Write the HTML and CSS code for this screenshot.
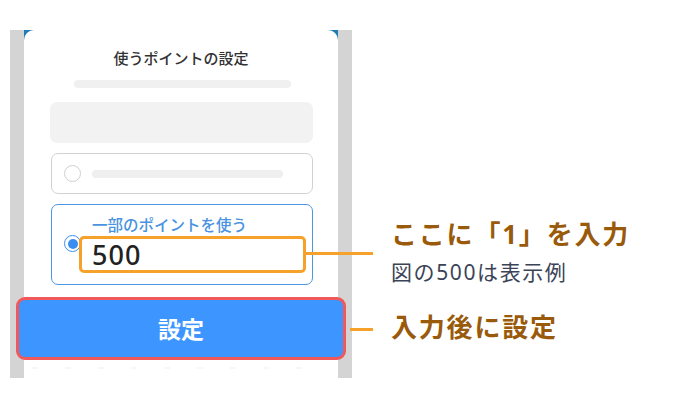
FILE: index.html
```html
<!DOCTYPE html>
<html lang="ja">
<head>
<meta charset="utf-8">
<link rel="stylesheet" href="styles.css">
</head>
<body>
<div class="page">
  <div class="frame">
    <div class="cardwrap">
      <div class="peek"></div>
      <div class="card">
        <div class="title">使うポイントの設定</div>
        <div class="bar"></div>
        <div class="block"></div>
        <div class="option">
          <span class="radio"></span>
          <span class="line"></span>
        </div>
        <div class="option selected">
          <span class="radio on"><span class="dot"></span></span>
          <div class="field">
            <div class="label">一部のポイントを使う</div>
            <div class="input">500</div>
          </div>
        </div>
        <div class="btn"><span>設定</span></div>
        <div class="rest"></div>
      </div>
    </div>
  </div>
  <div class="notes">
    <div class="head">ここに「1」を入力</div>
    <div class="sub">図の500は表示例</div>
    <div class="head second">入力後に設定</div>
  </div>
  <div class="conn conn1"></div>
  <div class="conn conn2"></div>
</div>
</body>
</html>
```
FILE: styles.css
```css
* { box-sizing: border-box; }
html, body { margin: 0; padding: 0; background: #fff; }
body {
  width: 700px; height: 420px; overflow: hidden;
  font-family: "Noto Sans", "Noto Sans CJK JP", sans-serif;
}
.page { position: relative; display: flex; width: 700px; height: 420px; }
.frame {
  margin: 30px 0 0 10px;
  width: 342px; height: 348px;
  background: #d4d4d4;
  padding: 0 14px;
}
.cardwrap { position: relative; height: 100%; }
.peek {
  position: absolute; left: 0; right: 0; top: 0; height: 12px;
  background:
    repeating-linear-gradient(90deg, #444 0 6px, transparent 6px 9px) 56px 0 / 204px 2px no-repeat,
    linear-gradient(90deg, #1f7bb3 0 14px, #e9e9e9 14px 300px, #1f7bb3 300px);
}
.card {
  position: relative;
  height: 100%;
  background: #fff;
  border-radius: 10px 10px 0 0;
  display: flex; flex-direction: column;
}
.title {
  padding-top: 18px;
  text-align: center;
  font-size: 15px; line-height: 20px;
  color: #333;
  font-weight: 500;
}
.bar {
  margin: 12px 47px 0 50px;
  height: 8px; border-radius: 4px;
  background: #f0f0f0;
}
.block {
  margin: 14px 25px 0 26px;
  height: 41px; border-radius: 7px;
  background: #f2f2f2;
}
.option {
  margin: 10px 25px 0 27px;
  height: 41px;
  border: 1px solid #d2d2d2;
  border-radius: 7px;
  display: flex; align-items: center;
}
.radio {
  flex: none;
  width: 17px; height: 17px;
  margin-left: 12px;
  border: 1px solid #cfcfcf;
  border-radius: 50%;
  background: #fff;
}
.line {
  margin-left: 11px;
  width: 191px; height: 8px;
  border-radius: 4px;
  background: #efefef;
}
.option.selected {
  height: 81px;
  border-color: #4d96e0;
  align-items: flex-start;
}
.radio.on {
  margin-top: 30px;
  border: 1.5px solid #3a8ef0;
  display: flex; align-items: center; justify-content: center;
}
.dot { width: 10px; height: 10px; border-radius: 50%; background: #3a8ef0; }
.field { flex: 1; margin: 0 6px 0 -2px; position: relative; }
.label {
  padding: 10px 0 0 13px;
  font-size: 15.5px; line-height: 20px;
  color: #4a93e0;
  font-weight: 500;
  white-space: nowrap;
}
.input {
  margin-top: 1px;
  height: 37px;
  border: 3px solid #f5a12a;
  border-radius: 5px;
  background: #fff;
  padding-left: 10px;
  font-size: 27px; line-height: 31px;
  letter-spacing: 1px;
  color: #222;
  font-weight: 500;
}
.btn {
  margin: 12px -8px 0 -8px;
  height: 63px;
  border: 3px solid #f0585a;
  border-radius: 9px;
  background: #3d95ff;
  display: flex; align-items: center; justify-content: center;
  position: relative;
}
.btn span {
  color: #fff; font-weight: 700;
  font-size: 23px; line-height: 28px;
}
.rest {
  flex: 1;
  background: repeating-linear-gradient(90deg, #f4f7fb 0 6px, transparent 6px 33px) 8px 7px / 290px 2px no-repeat;
}
.notes {
  margin-left: 39px;
  padding-top: 218px;
  display: flex; flex-direction: column;
}
.head {
  font-size: 26px; line-height: 32px;
  letter-spacing: 1.8px;
  font-weight: 700;
  color: #995a0b;
  white-space: nowrap;
}
.sub {
  margin-top: 9px;
  font-size: 21px; line-height: 26px;
  letter-spacing: 1.6px;
  color: #3b4457;
  white-space: nowrap;
}
.head.second { margin-top: 26px; }
.conn { position: absolute; height: 3px; background: #f5a12a; }
.conn1 { left: 306px; top: 252px; width: 67px; }
.conn2 { left: 350px; top: 328px; width: 23px; }
```
